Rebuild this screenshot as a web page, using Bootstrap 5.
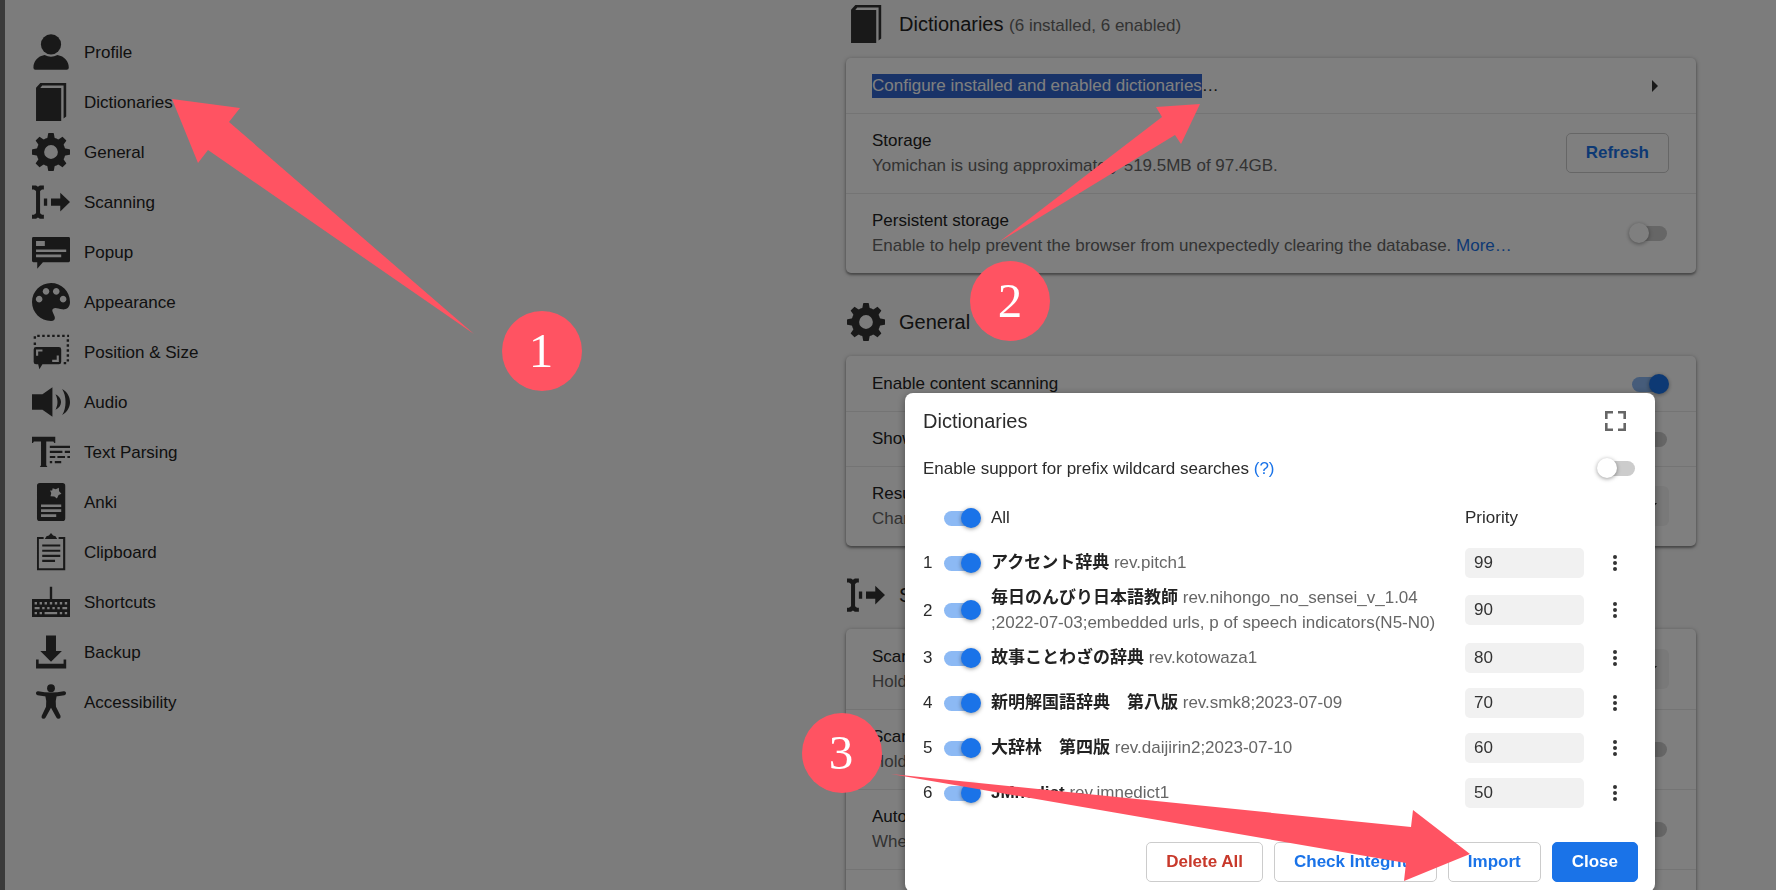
<!DOCTYPE html>
<html lang="en">
<head>
<meta charset="utf-8">
<meta name="viewport" content="width=device-width, initial-scale=1">
<title>Yomichan Settings</title>
<link href="https://cdn.jsdelivr.net/npm/bootstrap@5.3.0/dist/css/bootstrap.min.css" rel="stylesheet">
<style>
:root { --text: 17px; --line: 25px; --accent: #1a73e8; }
body { font-family: "Liberation Sans", "Noto Sans CJK JP", sans-serif; font-size: var(--text); line-height: var(--line); color: #222; background: #f8f8f8; }
.page { height: 100vh; overflow: hidden; border-left: 5px solid #767676; }
.side { padding: 27px 0 0 27px; }
.side a { height: 50px; gap: 14px; color: #222; }
.ico { width: 38px; height: 38px; flex: none; fill: #333; }
.main-col { flex: 0 1 850px; margin-right: 80px; }
.section-head { padding: 30px 0 15px 1px; gap: 14px; }
.section-head:first-child { padding-top: 5px; }
.section-head h2, .dialog-title { font-size: 20px; line-height: 38px; font-weight: 400; margin: 0; }
.muted { color: #666; }
.section-head .muted { font-size: var(--text); line-height: 1; }
.panel { background: #fff; border-radius: 5px; box-shadow: 0 1px 4px rgba(0,0,0,.35), 0 2px 2px rgba(0,0,0,.25); }
.setting { padding: 14px 27px 15px 26px; border-top: 1px solid #e8e8e8; }
.setting:first-child { border-top-color: transparent; }
.setting > :last-child:not(:first-child) { flex: none; }
.setting .btn, .setting .form-select { margin: -1px 0; }
.spare { height: 80px; }
.picked { background: #3367d1; color: #fff; padding: 2px 0 3px; }
a { color: var(--accent); text-decoration: none; }
.arrow-btn { border: 0; background: none; padding: 0; margin-right: 11px; }
.btn { font-size: var(--text); font-weight: 700; line-height: 24px; padding: 7px 19px; height: 40px; border-radius: 5px; --bs-btn-border-color: #ccc; --bs-btn-color: var(--accent); --bs-btn-bg: #fff; }
.btn-danger-text { --bs-btn-color: #c8392b; }
.btn-solid { --bs-btn-color: #fff; --bs-btn-bg: var(--accent); --bs-btn-border-color: var(--accent); }
.form-select { width: 190px; height: 40px; border: 0; font-size: var(--text); background-color: #f2f2f2; background-size: 10px 6px; background-position: right 12px center; background-image: url("data:image/svg+xml,%3Csvg xmlns='http://www.w3.org/2000/svg' viewBox='0 0 10 6'%3E%3Cpath d='M0 0h10L5 6z' fill='%23333'/%3E%3C/svg%3E"); }
.toggle { appearance: none; position: relative; display: block; width: 40px; height: 20px; margin: 0; flex: none; }
.toggle::before { content: ""; position: absolute; inset: 3px 2px 2px 3px; border-radius: 8px; background: #ccc; }
.toggle::after { content: ""; position: absolute; top: 0; left: 0; width: 20px; height: 20px; border-radius: 50%; background: #fff; box-shadow: 0 1px 4px rgba(0,0,0,.4); }
.toggle:checked::before { background: #8cb9f4; }
.toggle:checked::after { left: 20px; background: var(--accent); }
.overlay { position: fixed; inset: 0; padding: 393px 121px 0 0; background: rgba(0,0,0,.5); overflow: hidden; }
.dialog { width: 750px; flex: none; min-height: 499px; background: #fff; border-radius: 8px; padding: 9px 17px 10px 18px; box-shadow: 0 2px 8px rgba(0,0,0,.4); color: #2b2b2b; }
.plain { border: 0; background: none; padding: 0; display: flex; align-items: center; justify-content: center; }
.prefix-row { padding: 11px 1px 0 0; min-height: 45px; }
.dict { width: 100%; margin-top: 10px; }
.dict td, .dict th { height: 45px; padding: 0; font-weight: 400; vertical-align: middle; }
.dict .c-num { width: 18px; }
.dict .c-on { width: 50px; }
.dict .c-prio { width: 119px; }
.dict .c-menu { width: 54px; }
.dict b { color: #222; }
.dict .plain { width: 38px; height: 30px; margin-left: 12px; }
.prio { width: 119px; height: 30px; border: 0; border-radius: 5px; background: #f1f1f1; padding: 0 9px; color: #333; display: block; }
.foot { gap: 11px; padding-top: 27px; }
.marks { position: fixed; top: 0; left: 0; width: 1776px; height: 890px; fill: #ff5362; pointer-events: none; }
.marks text { font: 49px "Liberation Serif", serif; fill: #fff; text-anchor: middle; }
</style>
</head>
<body>
<svg width="0" height="0" class="position-absolute" aria-hidden="true">
  <symbol id="i-profile" viewBox="0 0 16 16"><circle cx="8" cy="4.8" r="4.25"/><path d="M5.3 9.3Q8 10.8 10.7 9.3C13.7 9.8 15.5 12 15.5 14.6Q15.5 15.5 14.6 15.5H1.4Q.6 15.5.6 14.6C.6 12 2.3 9.8 5.3 9.3Z"/></symbol>
  <symbol id="i-book" viewBox="0 0 16 16"><path d="M1.7 2L3.5 0H14.4V14.1L13.3 14.9V1.1H4.3L3.5 2.1H12.3V16H1.7Z"/></symbol>
  <symbol id="i-gear" viewBox="0 0 16 16"><circle cx="8" cy="8" r="4.5" fill="none" stroke="#333" stroke-width="3.2"/>
    <g id="teeth"><path id="tooth" d="M6.3 3L6.8.2Q6.8 0 7 0H9Q9.2 0 9.2.2L9.7 3Z"/><use href="#tooth" transform="rotate(90 8 8)"/><use href="#tooth" transform="rotate(180 8 8)"/><use href="#tooth" transform="rotate(270 8 8)"/></g><use href="#teeth" transform="rotate(45 8 8)"/></symbol>
  <symbol id="i-scan" viewBox="0 0 16 16"><path d="M0 1.1H1.7L2.5 1.6L3.3 1.1H5V2.7H4.2L3.4 3.4V12.7L4.2 13.4H5V15H3.3L2.5 14.5L1.7 15H0V13.4H.8L1.7 12.7V3.4L.8 2.7H0ZM5 6.5H6.4V9.6H5ZM8 6.5H11.9V4.1L16 8L11.9 12V9.6H8Z"/></symbol>
  <symbol id="i-popup" viewBox="0 0 16 16"><path fill-rule="evenodd" d="M.6 1.7H15.4Q16 1.7 16 2.3V11.7Q16 12.3 15.4 12.3H4.6L2.2 15.1V12.3H.6Q0 12.3 0 11.7V2.3Q0 1.7.6 1.7ZM1.7 3.4V5.5H5.4V3.4ZM1.7 6.9V8H14.4V6.9ZM1.7 9.1V10.2H12.3V9.1Z"/></symbol>
  <symbol id="i-palette" viewBox="0 0 16 16"><path fill-rule="evenodd" d="M8 0C12.4 0 16 3.4 16 8C16 10.3 14.6 11.2 12.8 11.1C11 10.9 10 10.2 8.9 10.8C7.9 11.4 9.3 13 9.6 14.3C9.8 15.4 9.2 16 8 16C3.6 16 0 12.4 0 8S3.6 0 8 0ZM3 5.4a1.4 1.4 0 1 0 .01 0ZM5.9 2.1a1.4 1.4 0 1 0 .01 0ZM10.2 2.1a1.4 1.4 0 1 0 .01 0ZM13.1 5.4a1.4 1.4 0 1 0 .01 0Z"/></symbol>
  <symbol id="i-position" viewBox="0 0 16 16"><path d="M1.2 5.1V3.3M1.2 2.4V.7M2.2 1.2H15.6M15.1 2.6V12.9M14.4 12.7H13.2" fill="none" stroke="#333" stroke-width="1" stroke-dasharray="1.05"/><path fill-rule="evenodd" d="M1.7 5.9H11.3Q12.3 5.9 12.3 6.9V12.2Q12.3 13.2 11.3 13.2H4.4L3.1 15.3L2.6 13.2H1.7Q.7 13.2.7 12.2V6.9Q.7 5.9 1.7 5.9ZM1.7 6.9V9.6H2.6V7.8H4.4V6.9ZM11.3 12.2V9.5H10.4V11.3H8.5V12.2Z"/></symbol>
  <symbol id="i-audio" viewBox="0 0 16 16"><path d="M0 4.7H4.4L8.6 1.8V14.2L4.4 11.3H0ZM9.9 4.7C13 6.2 13 9.8 9.9 11.3C11 9 11 7 9.9 4.7ZM12.7 2.5C17.1 5 17.1 11 12.7 13.5C14.6 10.5 14.6 5.5 12.7 2.5Z"/></symbol>
  <symbol id="i-parse" viewBox="0 0 16 16"><path d="M0 1.6H9.8V4.2H9.4L9 3.6H6V13.6L6.5 14.3H3.3L3.8 13.6V3.6H.8L.4 4.2H0ZM7.5 5.4H16V6.3H7.5ZM7.5 7.5H12.8V8.4H7.5ZM13.8 7.5H16V8.4H13.8ZM7.5 9.7H9.8V10.5H7.5ZM10.7 9.7H13.9V10.5H10.7ZM14.9 9.7H16V10.5H14.9ZM7.5 11.8H8.5V12.7H7.5ZM9.6 11.8H12.3V12.7H9.6Z"/></symbol>
  <symbol id="i-anki" viewBox="0 0 16 16"><path fill-rule="evenodd" d="M3.3 0H12.8Q14 0 14 1.2V14.8Q14 16 12.8 16H3.3Q2.1 16 2.1 14.8V1.2Q2.1 0 3.3 0ZM8.7 2.2L10 2.6L11.3 2L11.4 3.5L12.4 4.5L11.2 5.1L10.5 6.5L9.4 5.7L7.8 5.6L8.1 4.2L7.6 3.2L8.5 3.2ZM3.8 9V10.1H12.3V9ZM3.8 11.1V12.2H12.3V11.1ZM3.8 13.2V14.3H10.2V13.2Z"/></symbol>
  <symbol id="i-clip" viewBox="0 0 16 16"><path d="M4.9 1.7V2.5H2.9V14.8H13.1V2.5H11.2V1.7H14V15.7H2.1V1.7ZM5.4 2.5L6.1 1.4L7.1 1.1L8 0L8.9 1.1L9.9 1.4L10.6 2.5ZM4.3 4.8H11.9V5.7H4.3ZM4.3 7H11.9V7.9H4.3ZM4.3 9.2H11.9V10.1H4.3ZM4.3 11.3H9.7V12.2H4.3Z"/></symbol>
  <symbol id="i-keys" viewBox="0 0 16 16"><path fill-rule="evenodd" d="M7.5 1.6H8.5V6.7H16V14.3H0V6.7H7.5ZM1.1 8v1h1v-1ZM3.2 8v1h1v-1ZM5.3 8v1h1v-1ZM7.5 8v1h1v-1ZM9.6 8v1h1v-1ZM11.7 8v1h1v-1ZM13.8 8v1h1v-1ZM1.1 10.1v1h2.1v-1ZM4.3 10.1v1h1v-1ZM6.4 10.1v1h1v-1ZM8.6 10.1v1h1v-1ZM10.7 10.1v1h1v-1ZM12.8 10.1v1h2v-1ZM1.1 12.2v1h1v-1ZM3.2 12.2v1h1v-1ZM5.3 12.2v1h5.3v-1ZM11.7 12.2v1h1v-1ZM13.8 12.2v1h1v-1Z"/></symbol>
  <symbol id="i-backup" viewBox="0 0 16 16"><path d="M5.9 1.1H10.1V7.6H12.6L8 12.1L3.5 7.6H5.9ZM1.7 11.2H2.8V12.9H13.3V11.2H14.4V14.9H1.7Z"/></symbol>
  <symbol id="i-access" viewBox="0 0 16 16"><circle cx="8" cy="2.2" r="1.65"/><path d="M2.5 4.3Q8 5.4 13.5 4.3" fill="none" stroke="#333" stroke-width="1.7" stroke-linecap="round"/><path d="M5.5 4.8H10.5Q9.7 7.7 10.1 10L12 13.8Q12.2 15 11.2 15.1Q10.5 15.1 10.2 14.4L8 10.4L5.8 14.4Q5.5 15.1 4.8 15.1Q3.8 15 4.1 13.8L5.9 10Q6.3 7.7 5.5 4.8Z"/></symbol>
</svg>

<div class="page d-flex">
  <nav class="side flex-grow-1" aria-label="Sections">
    <a href="#profile" class="d-flex align-items-center"><svg class="ico"><use href="#i-profile"/></svg>Profile</a>
    <a href="#dictionaries" class="d-flex align-items-center"><svg class="ico"><use href="#i-book"/></svg>Dictionaries</a>
    <a href="#general" class="d-flex align-items-center"><svg class="ico"><use href="#i-gear"/></svg>General</a>
    <a href="#scanning" class="d-flex align-items-center"><svg class="ico"><use href="#i-scan"/></svg>Scanning</a>
    <a href="#popup" class="d-flex align-items-center"><svg class="ico"><use href="#i-popup"/></svg>Popup</a>
    <a href="#appearance" class="d-flex align-items-center"><svg class="ico"><use href="#i-palette"/></svg>Appearance</a>
    <a href="#position" class="d-flex align-items-center"><svg class="ico"><use href="#i-position"/></svg>Position &amp; Size</a>
    <a href="#audio" class="d-flex align-items-center"><svg class="ico"><use href="#i-audio"/></svg>Audio</a>
    <a href="#parsing" class="d-flex align-items-center"><svg class="ico"><use href="#i-parse"/></svg>Text Parsing</a>
    <a href="#anki" class="d-flex align-items-center"><svg class="ico"><use href="#i-anki"/></svg>Anki</a>
    <a href="#clipboard" class="d-flex align-items-center"><svg class="ico"><use href="#i-clip"/></svg>Clipboard</a>
    <a href="#shortcuts" class="d-flex align-items-center"><svg class="ico"><use href="#i-keys"/></svg>Shortcuts</a>
    <a href="#backup" class="d-flex align-items-center"><svg class="ico"><use href="#i-backup"/></svg>Backup</a>
    <a href="#accessibility" class="d-flex align-items-center"><svg class="ico"><use href="#i-access"/></svg>Accessibility</a>
  </nav>

  <main class="main-col">
    <div class="section-head d-flex align-items-center" id="dictionaries">
      <svg class="ico"><use href="#i-book"/></svg>
      <h2>Dictionaries <span class="muted">(6 installed, 6 enabled)</span></h2>
    </div>
    <div class="panel">
      <div class="setting d-flex align-items-center justify-content-between">
        <div><span class="picked">Configure installed and enabled dictionaries</span>…</div>
        <button type="button" class="arrow-btn d-flex" aria-label="Open"><svg width="6" height="12" fill="#333"><path d="M0 0L6 6L0 12Z"/></svg></button>
      </div>
      <div class="setting d-flex align-items-center justify-content-between">
        <div>Storage<div class="muted">Yomichan is using approximately 519.5MB of 97.4GB.</div></div>
        <button type="button" class="btn">Refresh</button>
      </div>
      <div class="setting d-flex align-items-center justify-content-between">
        <div><label for="persist">Persistent storage</label><div class="muted">Enable to help prevent the browser from unexpectedly clearing the database. <a href="#more">More…</a></div></div>
        <input type="checkbox" class="toggle" id="persist">
      </div>
    </div>

    <div class="section-head d-flex align-items-center" id="general">
      <svg class="ico"><use href="#i-gear"/></svg>
      <h2>General</h2>
    </div>
    <div class="panel">
      <div class="setting d-flex align-items-center justify-content-between">
        <label for="scan-on">Enable content scanning</label>
        <input type="checkbox" class="toggle" id="scan-on" checked>
      </div>
      <div class="setting d-flex align-items-center justify-content-between">
        <label for="guide">Show the guide on startup</label>
        <input type="checkbox" class="toggle" id="guide">
      </div>
      <div class="setting d-flex align-items-center justify-content-between">
        <div><label for="mode">Result grouping mode</label><div class="muted">Change how results are shown.</div></div>
        <select class="form-select" id="mode"><option>Group</option></select>
      </div>
    </div>

    <div class="section-head d-flex align-items-center" id="scanning">
      <svg class="ico"><use href="#i-scan"/></svg>
      <h2>Scanning</h2>
    </div>
    <div class="panel">
      <div class="setting d-flex align-items-center justify-content-between">
        <div><label for="mod">Scan modifier key</label><div class="muted">Hold a key to scan text.</div></div>
        <select class="form-select" id="mod"><option>Shift</option></select>
      </div>
      <div class="setting d-flex align-items-center justify-content-between">
        <div><label for="middle">Scan using middle mouse</label><div class="muted">Hold the middle button.</div></div>
        <input type="checkbox" class="toggle" id="middle">
      </div>
      <div class="setting d-flex align-items-center justify-content-between">
        <div><label for="hide">Auto-hide results</label><div class="muted">When text is not found.</div></div>
        <input type="checkbox" class="toggle" id="hide">
      </div>
      <div class="setting spare"></div>
    </div>
  </main>
</div>

<div class="overlay d-flex justify-content-end align-items-start">
  <section class="dialog" role="dialog" aria-labelledby="dlg">
    <div class="d-flex align-items-center justify-content-between">
      <h2 class="dialog-title" id="dlg">Dictionaries</h2>
      <button type="button" class="plain me-2 pe-1" aria-label="Expand"><svg width="22" height="20" viewBox="0 0 22 20" fill="none" stroke="#666" stroke-width="2.6"><path d="M2.3 8V1.3H9M14 1.3H20.7V8M20.7 12V18.7H14M9 18.7H2.3V12"/></svg></button>
    </div>
    <div class="prefix-row d-flex align-items-center justify-content-between">
      <div><label for="prefix">Enable support for prefix wildcard searches</label> <a href="#help">(?)</a></div>
      <input type="checkbox" class="toggle" id="prefix">
    </div>
    <table class="dict">
      <thead>
        <tr><th class="c-num"></th><th class="c-on"><input type="checkbox" class="toggle" id="d0" checked></th><th><label for="d0">All</label></th><th class="c-prio">Priority</th><th class="c-menu"></th></tr>
      </thead>
      <tbody>
        <tr><td>1</td><td><input type="checkbox" class="toggle" id="d1" checked></td><td><label for="d1"><b>アクセント辞典</b> <span class="muted">rev.pitch1</span></label></td><td><input class="prio" value="99" aria-label="Priority 1"></td><td><button type="button" class="plain" aria-label="Menu 1"><svg width="4" height="16" fill="#333"><circle cx="2" cy="2" r="2"/><circle cx="2" cy="8" r="2"/><circle cx="2" cy="14" r="2"/></svg></button></td></tr>
        <tr><td>2</td><td><input type="checkbox" class="toggle" id="d2" checked></td><td><label for="d2"><b>毎日のんびり日本語教師</b> <span class="muted">rev.nihongo_no_sensei_v_1.04<br>;2022-07-03;embedded urls, p of speech indicators(N5-N0)</span></label></td><td><input class="prio" value="90" aria-label="Priority 2"></td><td><button type="button" class="plain" aria-label="Menu 2"><svg width="4" height="16" fill="#333"><circle cx="2" cy="2" r="2"/><circle cx="2" cy="8" r="2"/><circle cx="2" cy="14" r="2"/></svg></button></td></tr>
        <tr><td>3</td><td><input type="checkbox" class="toggle" id="d3" checked></td><td><label for="d3"><b>故事ことわざの辞典</b> <span class="muted">rev.kotowaza1</span></label></td><td><input class="prio" value="80" aria-label="Priority 3"></td><td><button type="button" class="plain" aria-label="Menu 3"><svg width="4" height="16" fill="#333"><circle cx="2" cy="2" r="2"/><circle cx="2" cy="8" r="2"/><circle cx="2" cy="14" r="2"/></svg></button></td></tr>
        <tr><td>4</td><td><input type="checkbox" class="toggle" id="d4" checked></td><td><label for="d4"><b>新明解国語辞典　第八版</b> <span class="muted">rev.smk8;2023-07-09</span></label></td><td><input class="prio" value="70" aria-label="Priority 4"></td><td><button type="button" class="plain" aria-label="Menu 4"><svg width="4" height="16" fill="#333"><circle cx="2" cy="2" r="2"/><circle cx="2" cy="8" r="2"/><circle cx="2" cy="14" r="2"/></svg></button></td></tr>
        <tr><td>5</td><td><input type="checkbox" class="toggle" id="d5" checked></td><td><label for="d5"><b>大辞林　第四版</b> <span class="muted">rev.daijirin2;2023-07-10</span></label></td><td><input class="prio" value="60" aria-label="Priority 5"></td><td><button type="button" class="plain" aria-label="Menu 5"><svg width="4" height="16" fill="#333"><circle cx="2" cy="2" r="2"/><circle cx="2" cy="8" r="2"/><circle cx="2" cy="14" r="2"/></svg></button></td></tr>
        <tr><td>6</td><td><input type="checkbox" class="toggle" id="d6" checked></td><td><label for="d6"><b>JMnedict</b> <span class="muted">rev.jmnedict1</span></label></td><td><input class="prio" value="50" aria-label="Priority 6"></td><td><button type="button" class="plain" aria-label="Menu 6"><svg width="4" height="16" fill="#333"><circle cx="2" cy="2" r="2"/><circle cx="2" cy="8" r="2"/><circle cx="2" cy="14" r="2"/></svg></button></td></tr>
      </tbody>
    </table>
    <div class="foot d-flex justify-content-end">
      <button type="button" class="btn btn-danger-text">Delete All</button>
      <button type="button" class="btn">Check Integrity</button>
      <button type="button" class="btn">Import</button>
      <button type="button" class="btn btn-solid">Close</button>
    </div>
  </section>
</div>

<svg class="marks" viewBox="0 0 1776 890">
  <path d="M172 99L240 108L229 122L474 334L208 150L198 163Z"/>
  <path d="M1200 104L1156 107L1162 117L999 242L1175 135L1181 144Z"/>
  <path d="M891 774L1411 827L1413 810L1470 854L1404 881L1406 863Z"/>
  <circle cx="542" cy="351" r="40"/><circle cx="1010" cy="301" r="40"/><circle cx="842" cy="753" r="40"/>
  <text x="541" y="367">1</text><text x="1010" y="317">2</text><text x="841" y="769">3</text>
</svg>
<script src="https://cdn.jsdelivr.net/npm/bootstrap@5.3.0/dist/js/bootstrap.bundle.min.js"></script>
</body>
</html>
